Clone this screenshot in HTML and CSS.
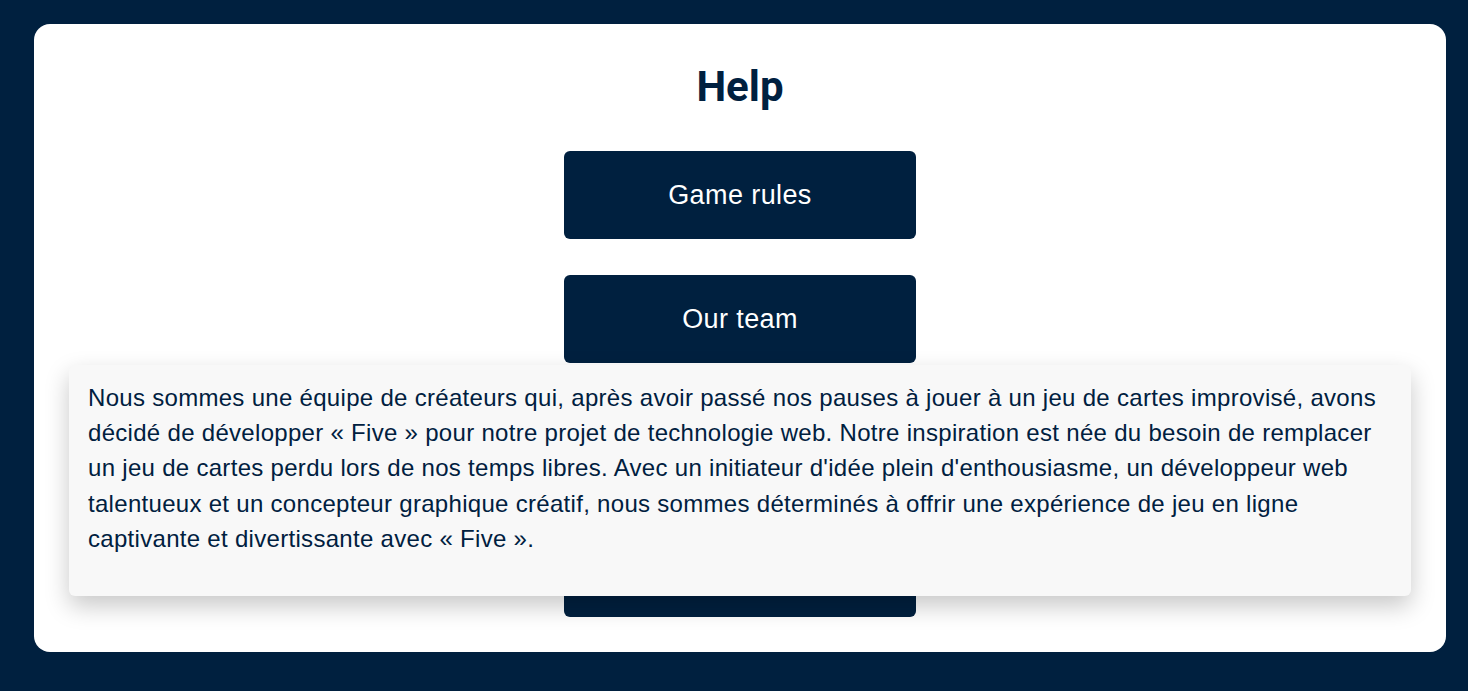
FILE: index.html
```html
<!DOCTYPE html>
<html lang="fr">
<head>
<meta charset="utf-8">
<title>Help</title>
<link rel="stylesheet" href="styles.css">
</head>
<body>
<main class="card">
  <h1 class="title">Help</h1>
  <div class="menu">
    <button class="menu-btn">Game rules</button>
    <button class="menu-btn">Our team</button>
    <button class="menu-btn menu-btn--last">Contact</button>
  </div>
  <div class="popup">
    <p class="popup-text">Nous sommes une équipe de créateurs qui, après avoir passé nos pauses à jouer à un jeu de cartes improvisé, avons décidé de développer « Five » pour notre projet de technologie web. Notre inspiration est née du besoin de remplacer un jeu de cartes perdu lors de nos temps libres. Avec un initiateur d'idée plein d'enthousiasme, un développeur web talentueux et un concepteur graphique créatif, nous sommes déterminés à offrir une expérience de jeu en ligne captivante et divertissante avec « Five ».</p>
  </div>
</main>
</body>
</html>
```
FILE: styles.css
```css
* { box-sizing: border-box; }
html, body { height: 100%; }
body {
  margin: 0;
  padding: 24px 22px 39px 34px;
  background: #00203f;
  font-family: "Liberation Sans", Arial, sans-serif;
  color: #00203f;
}
.card {
  position: relative;
  height: 628px;
  background: #ffffff;
  border-radius: 16px;
  display: flex;
  flex-direction: column;
  align-items: center;
  padding-top: 38px;
}
.title {
  margin: 0;
  font-family: Roboto, "Liberation Sans", sans-serif;
  font-weight: 700;
  font-size: 42px;
  line-height: 50px;
  color: #00203f;
}
.menu {
  margin-top: 39px;
  display: flex;
  flex-direction: column;
  gap: 36px;
}
.menu-btn {
  width: 352px;
  height: 88px;
  border: none;
  border-radius: 6px;
  background: #00203f;
  color: #ffffff;
  font-family: "Liberation Sans", Arial, sans-serif;
  font-size: 27px;
  letter-spacing: 0.4px;
  cursor: pointer;
}
.menu-btn--last { margin-top: 130px; }
.popup {
  position: absolute;
  left: 35px;
  right: 35px;
  top: 341px;
  height: 231px;
  background: #f8f8f8;
  border-radius: 6px;
  box-shadow: 0 10px 24px rgba(0, 0, 0, 0.22);
  padding: 15px 19px;
}
.popup-text {
  margin: 0;
  font-size: 24px;
  letter-spacing: 0.3px;
  line-height: 35.2px;
  color: #00203f;
}
```
